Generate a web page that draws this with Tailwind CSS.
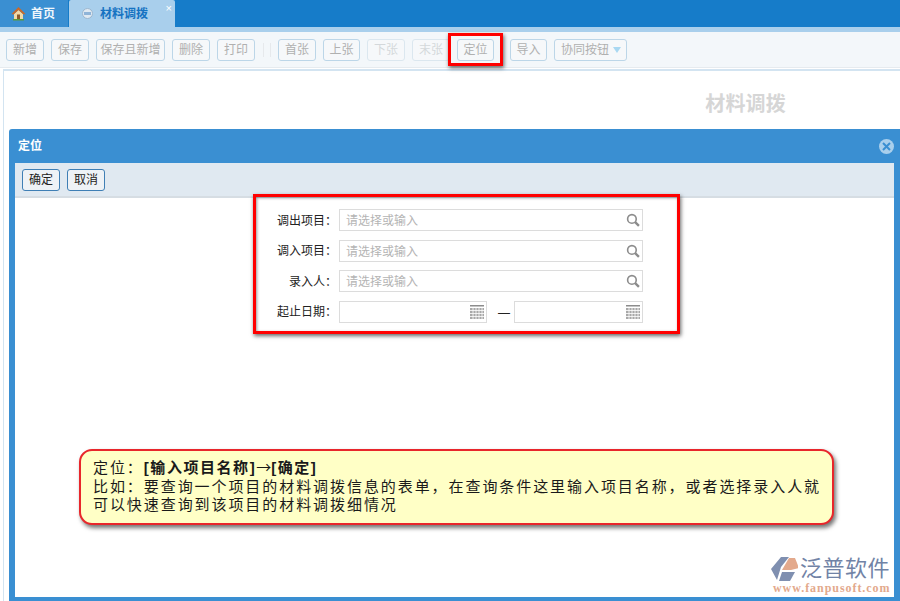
<!DOCTYPE html>
<html lang="zh-CN">
<head>
<meta charset="UTF-8">
<title>材料调拨</title>
<script src="https://cdn.jsdelivr.net/npm/@tailwindcss/browser@4"></script>
</head>
<body class="relative w-[900px] h-[601px] overflow-hidden bg-white font-['Liberation_Sans','Noto_Sans_CJK_SC',sans-serif]">

<!-- tabs -->
<div class="h-[27px] bg-[#167cc9] flex items-stretch">
  <div class="w-[68px] bg-[#3a8fd2] flex items-center pl-[11px] gap-[5px] text-[12px] font-bold text-[#eef6fc]">
    <svg class="w-[15px] h-[15px]" viewBox="0 0 15 15"><path d="M3 8 L7.5 4 L12 8 V13 H3Z" fill="#f1d9a8"/><path d="M7.5 1 L0.5 8 L2.5 8.5 L7.5 4 L12.5 8.5 L14.5 8Z" fill="#c8692a"/><rect x="6" y="8.5" width="3" height="4.5" fill="#8a5a2c"/><rect x="2" y="13" width="11" height="1.5" fill="#5b9a3c"/></svg>
    <span>首页</span>
  </div>
  <div class="relative w-[106px] ml-px bg-[#a9cfec] rounded-t-[2px] flex items-center pl-[13px] gap-[7px] text-[12px] font-bold text-[#1673c2]">
    <span class="w-[11px] h-[11px] rounded-full bg-[#dfe9f2] border border-[#9db7cf] flex items-center justify-center"><span class="w-[7px] h-[3px] bg-[#8fb4d8]"></span></span>
    <span>材料调拨</span>
    <span class="absolute right-[3px] top-0 text-[11px] leading-[16px] font-normal text-white">×</span>
  </div>
</div>
<div class="h-[5px] bg-[#a9cfec]"></div>

<!-- toolbar -->
<div class="h-[36px] bg-[#f3f7fa] border-b border-[#e6ebef] flex items-center pl-[6px] text-[12px] text-[#b0b0b0]">
  <button class="w-[38px] h-[22px] mr-[7px] rounded-[3px] border border-[#bcd6e8] bg-[#f6f8fa]">新增</button>
  <button class="w-[38px] h-[22px] mr-[7px] rounded-[3px] border border-[#bcd6e8] bg-[#f6f8fa]">保存</button>
  <button class="w-[69px] h-[22px] mr-[7px] rounded-[3px] border border-[#bcd6e8] bg-[#f6f8fa]">保存且新增</button>
  <button class="w-[38px] h-[22px] mr-[7px] rounded-[3px] border border-[#bcd6e8] bg-[#f6f8fa]">删除</button>
  <button class="w-[38px] h-[22px] rounded-[3px] border border-[#bcd6e8] bg-[#f6f8fa]">打印</button>
  <span class="w-px h-[14px] bg-[#e6e9ec] ml-[8px]"></span>
  <span class="w-px h-[14px] bg-[#e6e9ec] ml-[6px] mr-[7px]"></span>
  <button class="w-[38px] h-[22px] mr-[7px] rounded-[3px] border border-[#bcd6e8] bg-[#f6f8fa]">首张</button>
  <button class="w-[37px] h-[22px] mr-[7px] rounded-[3px] border border-[#bcd6e8] bg-[#f6f8fa]">上张</button>
  <button class="w-[38px] h-[22px] mr-[7px] rounded-[3px] border border-[#dbe7ef] bg-[#f6f8fa] text-[#d4d8db]">下张</button>
  <button class="w-[38px] h-[22px] mr-[7px] rounded-[3px] border border-[#dbe7ef] bg-[#f6f8fa] text-[#d4d8db]">末张</button>
  <button class="w-[37px] h-[22px] mr-[16px] rounded-[3px] border border-[#bcd6e8] bg-[#f6f8fa]">定位</button>
  <button class="w-[37px] h-[22px] mr-[7px] rounded-[3px] border border-[#bcd6e8] bg-[#f6f8fa]">导入</button>
  <button class="w-[73px] h-[22px] rounded-[3px] border border-[#bcd6e8] bg-[#f6f8fa] flex items-center pl-[6px] gap-[4px] whitespace-nowrap">
    <span>协同按钮</span>
    <span class="w-0 h-0 border-x-[4px] border-x-transparent border-t-[6px] border-t-[#a9d8f2]"></span>
  </button>
</div>

<!-- page behind the dialog -->
<div class="h-[533px] mt-px ml-[3px] border-t-2 border-l border-[#d3e4f1] bg-white flex justify-end pr-[114px] pt-[20px]">
  <h1 class="text-[20px] leading-[26px] font-bold tracking-[0.2px] text-[#d6d6d6]">材料调拨</h1>
</div>

<!-- dialog -->
<div class="absolute left-[9px] top-[129px] w-[891px] h-[472px] bg-[#3a8fd2] rounded-tl-[3px] flex flex-col">
  <div class="h-[34px] flex items-center justify-between pl-[9px] pr-[6px] text-[12px] font-bold text-white">
    <span>定位</span>
    <span class="w-[15px] h-[15px] rounded-full bg-[#a9cfec] flex items-center justify-center">
      <svg class="w-[9px] h-[9px]" viewBox="0 0 9 9"><path d="M1 1 L8 8 M8 1 L1 8" stroke="#3a8fd2" stroke-width="2"/></svg>
    </span>
  </div>
  <div class="ml-[6px] w-[879px] h-[434px] bg-white flex flex-col">
    <div class="h-[35px] bg-[#e0e9f1] border-b-2 border-[#d6dde3] flex items-center pl-[7px] gap-[7px] text-[12px] text-[#222]">
      <button class="w-[38px] h-[22px] rounded-[3px] border border-[#3f7fb5] bg-[#eef2f6]">确定</button>
      <button class="w-[38px] h-[22px] rounded-[3px] border border-[#3f7fb5] bg-[#eef2f6]">取消</button>
    </div>
    <form class="pt-[11px] pl-[255px] flex flex-col gap-[8.5px] text-[12px] text-[#222]">
      <div class="flex items-center">
        <label class="w-[67px] pt-px text-right mr-[2px]">调出项目：</label>
        <div class="w-[304px] h-[22px] border border-[#dcdcdc] flex items-center justify-between pl-[6px] pr-[2px] text-[#b4b4b4]">
          <span class="pt-[2px]">请选择或输入</span>
          <svg class="w-[14px] h-[14px]" viewBox="0 0 13 13" fill="none" stroke="#8c8c8c"><circle cx="5.5" cy="5.5" r="4" stroke-width="1.5"/><path d="M8.5 8.5 L12 12" stroke-width="2.2"/></svg>
        </div>
      </div>
      <div class="flex items-center">
        <label class="w-[67px] pt-px text-right mr-[2px]">调入项目：</label>
        <div class="w-[304px] h-[22px] border border-[#dcdcdc] flex items-center justify-between pl-[6px] pr-[2px] text-[#b4b4b4]">
          <span class="pt-[2px]">请选择或输入</span>
          <svg class="w-[14px] h-[14px]" viewBox="0 0 13 13" fill="none" stroke="#8c8c8c"><circle cx="5.5" cy="5.5" r="4" stroke-width="1.5"/><path d="M8.5 8.5 L12 12" stroke-width="2.2"/></svg>
        </div>
      </div>
      <div class="flex items-center">
        <label class="w-[67px] pt-px text-right mr-[2px]">录入人：</label>
        <div class="w-[304px] h-[22px] border border-[#dcdcdc] flex items-center justify-between pl-[6px] pr-[2px] text-[#b4b4b4]">
          <span class="pt-[2px]">请选择或输入</span>
          <svg class="w-[14px] h-[14px]" viewBox="0 0 13 13" fill="none" stroke="#8c8c8c"><circle cx="5.5" cy="5.5" r="4" stroke-width="1.5"/><path d="M8.5 8.5 L12 12" stroke-width="2.2"/></svg>
        </div>
      </div>
      <div class="flex items-center">
        <label class="w-[67px] pt-px text-right mr-[2px]">起止日期：</label>
        <div class="w-[148px] h-[22px] border border-[#dcdcdc] flex items-center justify-end pr-[2px]">
          <svg class="w-[14px] h-[14px]" viewBox="0 0 14 14"><rect width="14" height="1.5" fill="#8c8c8c"/><path d="M0 3h14v11H0z" fill="#a8a8a8"/><path d="M0 5.5h14M0 8.5h14M0 11.5h14M3 3v11M6 3v11M9 3v11M12 3v11" stroke="#fff" stroke-width="0.8"/></svg>
        </div>
        <span class="w-[27px] pl-[11px] pt-[2px] text-[#222]">—</span>
        <div class="w-[129px] h-[22px] border border-[#dcdcdc] flex items-center justify-end pr-[2px]">
          <svg class="w-[14px] h-[14px]" viewBox="0 0 14 14"><rect width="14" height="1.5" fill="#8c8c8c"/><path d="M0 3h14v11H0z" fill="#a8a8a8"/><path d="M0 5.5h14M0 8.5h14M0 11.5h14M3 3v11M6 3v11M9 3v11M12 3v11" stroke="#fff" stroke-width="0.8"/></svg>
        </div>
      </div>
    </form>
  </div>
</div>

<!-- red annotation frames -->
<div class="absolute left-[448px] top-[33px] w-[55px] h-[33px] border-[3px] border-[#f00] shadow-[1px_2px_4px_rgba(0,0,0,0.6)]"></div>
<div class="absolute left-[253px] top-[194px] w-[427px] h-[140px] border-[3px] border-[#f00] shadow-[1px_2px_4px_rgba(0,0,0,0.6),inset_1px_1px_3px_rgba(0,0,0,0.4)]"></div>

<!-- callout -->
<div class="absolute left-[79px] top-[449px] w-[755px] h-[76px] rounded-[13px] border-2 border-[#e8262b] bg-[#ffffc6] shadow-[2px_3px_4px_rgba(0,0,0,0.55)] pl-[12px] pt-[7px] text-[15px] leading-[18.5px] tracking-[1.93px] text-[#1a1a1a]">
  <p><span>定位：</span><b class="tracking-[1.55px]">[输入项目名称]<span class="font-normal tracking-normal font-['Noto_Sans_CJK_SC']">→</span>[确定]</b></p>
  <p>比如：要查询一个项目的材料调拨信息的表单，在查询条件这里输入项目名称，或者选择录入人就</p>
  <p>可以快速查询到该项目的材料调拨细情况</p>
</div>

<!-- watermark logo -->
<div class="absolute left-[770px] top-[555px] flex flex-col">
  <div class="flex items-center h-[28px]">
    <svg class="w-[28px] h-[28px]" viewBox="0 0 28 28">
      <path d="M11 2 H19 L11 12 L7 25 L1 14Z" fill="#7f8fb0"/>
      <path d="M19 3 H25 L29 13 L21 15 H12Z" fill="#e3a98c"/>
      <path d="M12 17 H25 L20 26 H9Z" fill="#7f8fb0"/>
    </svg>
    <span class="ml-[2px] text-[22px] leading-[28px] tracking-[0.5px] text-[#7183a6]">泛普软件</span>
  </div>
  <span class="ml-[3px] mt-[-1px] text-[12px] leading-[12px] tracking-[0.95px] font-['Liberation_Serif',serif] font-bold text-[#e3a98c]">www.fanpusoft.com</span>
</div>

</body>
</html>
